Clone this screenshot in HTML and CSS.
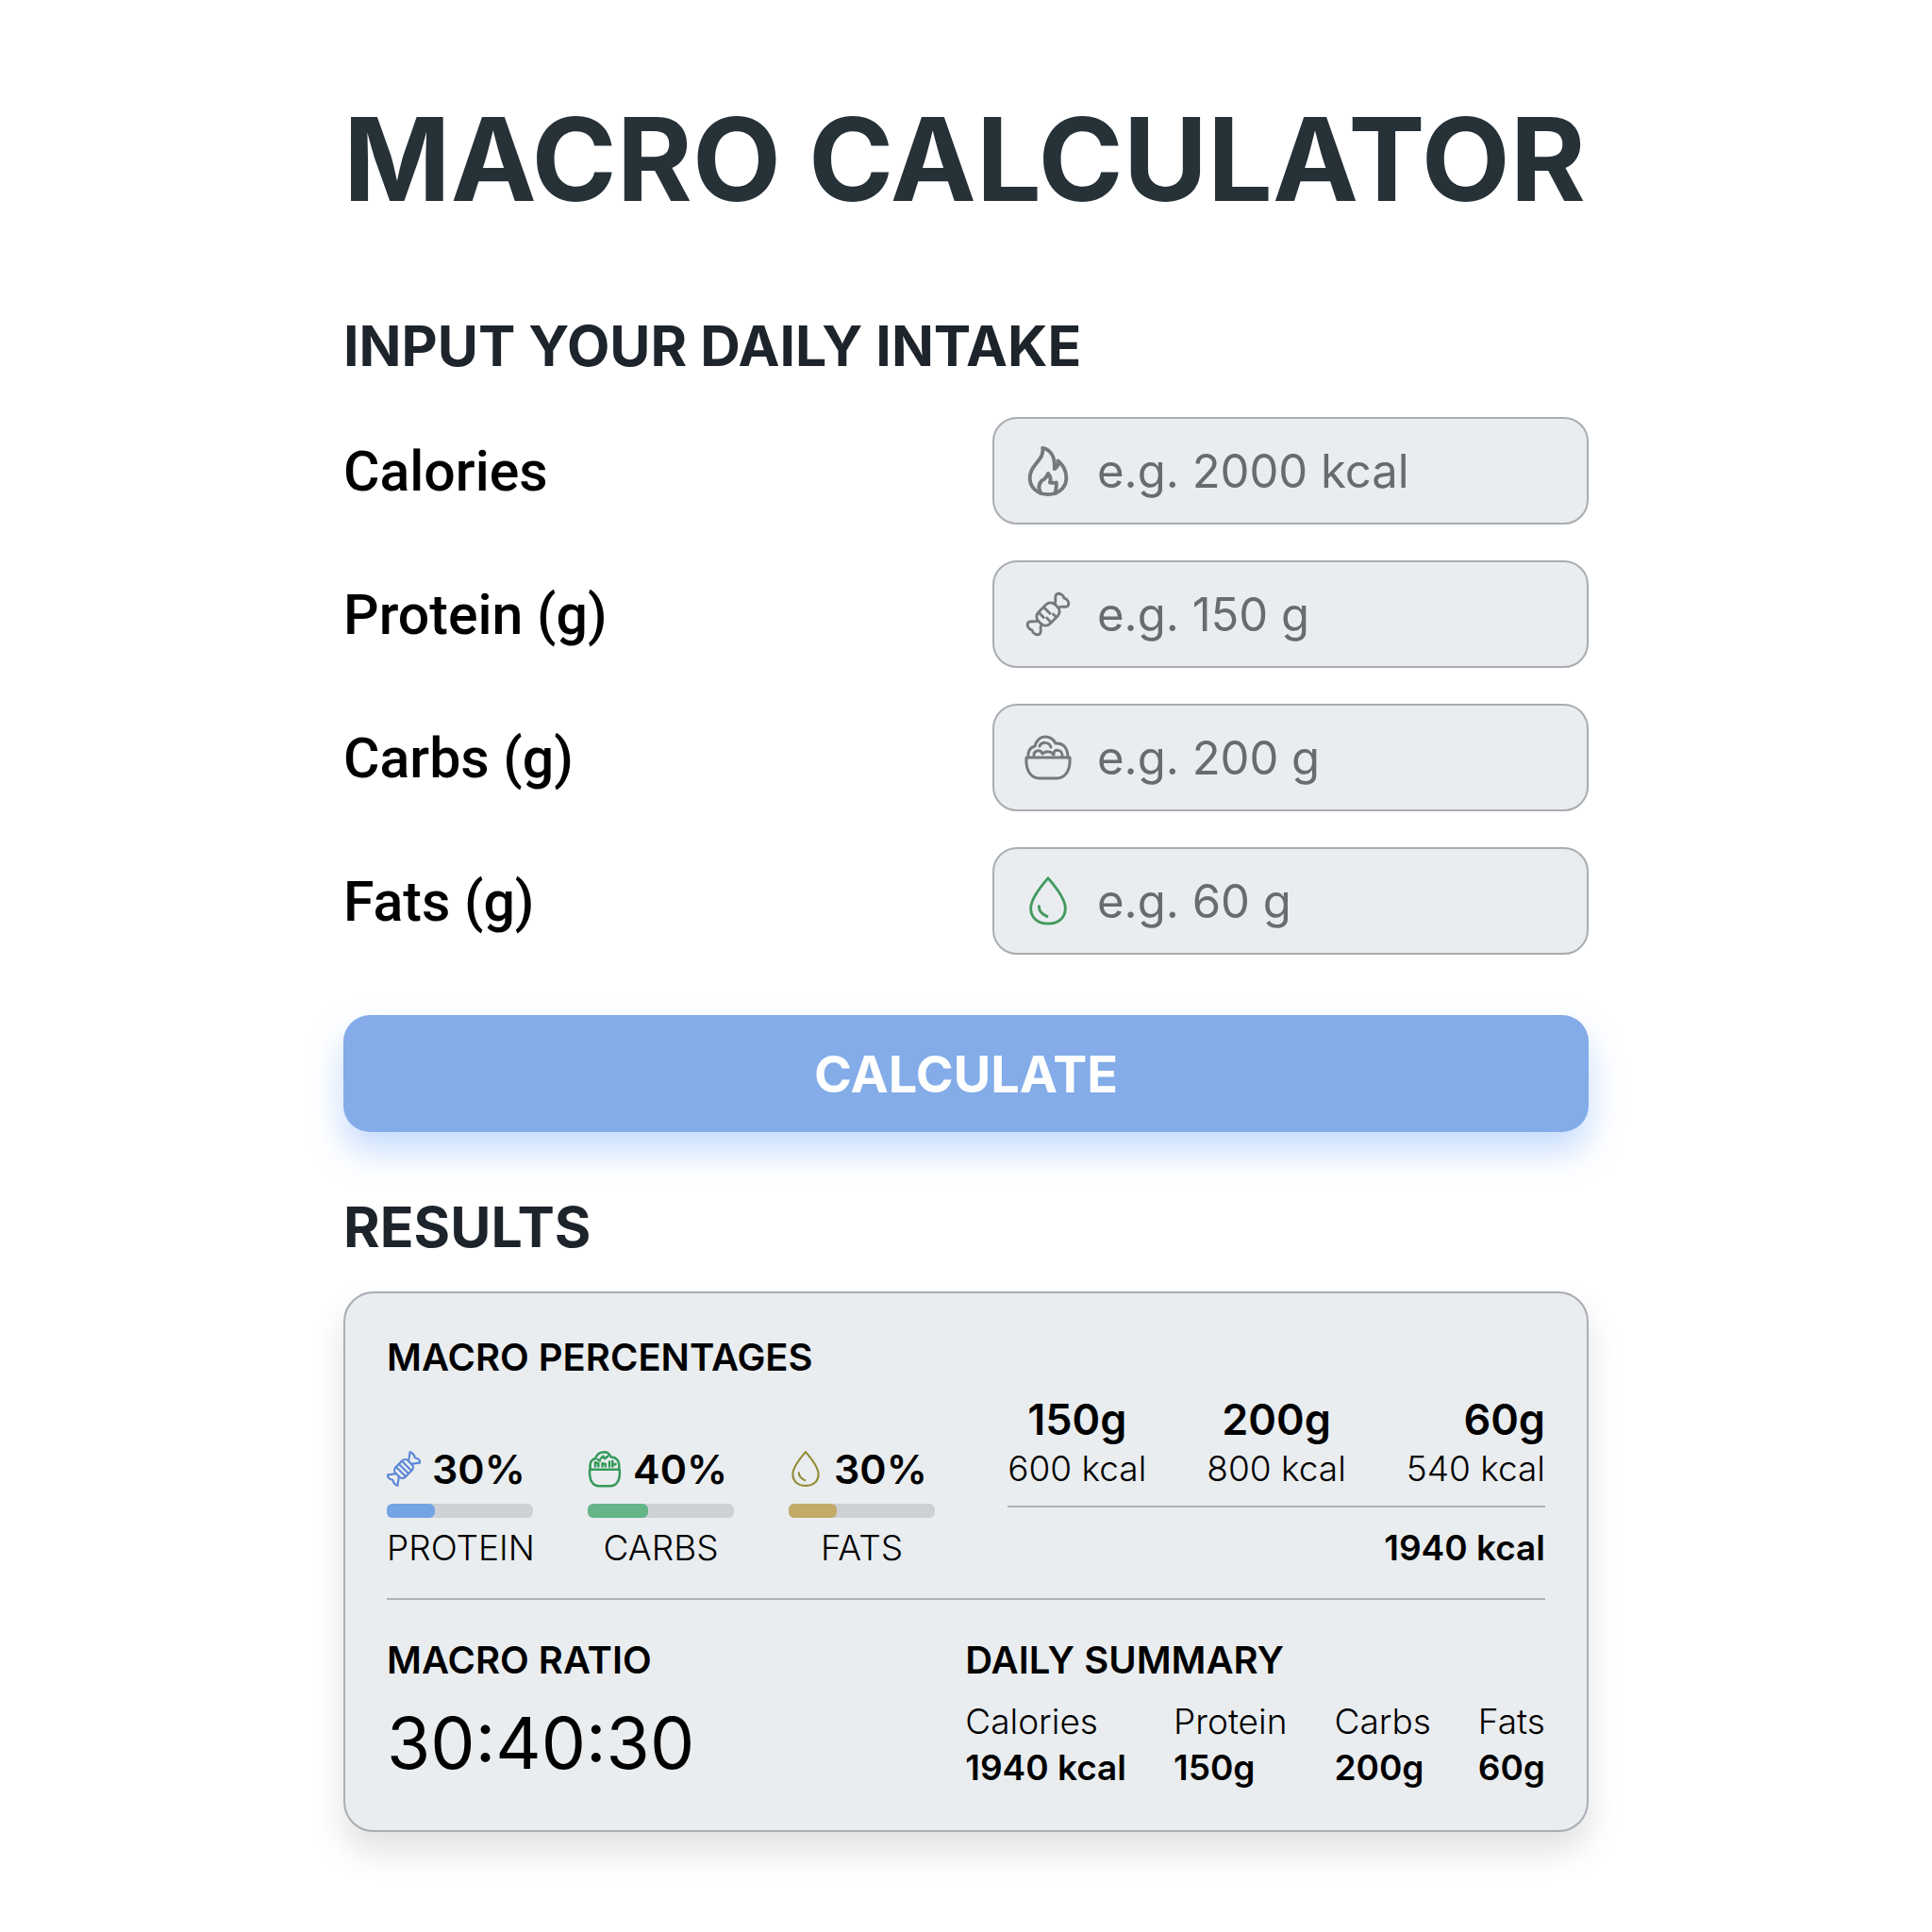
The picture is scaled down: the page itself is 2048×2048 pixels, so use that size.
FILE: index.html
```html
<!DOCTYPE html>
<html lang="en">
<head>
    <meta charset="UTF-8">
    <meta name="viewport" content="width=device-width, initial-scale=1.0">
    <title>Macro Calculator</title>
    <link rel="stylesheet" href="styles.css">
</head>
<body>

    <!-- Shared icons -->
    <svg class="sprite" aria-hidden="true">
        <symbol id="icon-flame" viewBox="0 0 46 56">
            <path d="M17 3C26 5 31 13 30 26 33 24 35 21 34 17 40 22 43 29 43 36 43 47 34 54 23 54S3 47 3 36C3 29 6 25 10 20 15 14 18 10 17 3z"/>
            <path d="M15 53C12 47 13 42 16 39 20 37 22 34 23 31 26 34 26 38 25 41 28 41 30 42 32 41 33 45 31 48 31 53"/>
        </symbol>
        <symbol id="icon-candy" viewBox="3 0 50 50">
            <g transform="rotate(-45 28 25)">
                <rect x="15" y="16" width="26" height="18" rx="7"/>
                <path d="M41 22C45 22 46 16 50 16 54 17 55 22 53 25 55 28 54 33 50 34 46 34 45 28 41 28"/>
                <path d="M15 22C11 22 10 16 6 16 2 17 1 22 3 25 1 28 2 33 6 34 10 34 11 28 15 28"/>
                <path d="M22 17v7M30 17v9M24 33v-6M32 33v-4"/>
            </g>
        </symbol>
        <symbol id="icon-candy-striped" viewBox="3 0 50 50">
            <g transform="rotate(-45 28 25)">
                <rect x="15" y="15" width="26" height="20" rx="6"/>
                <path d="M41 22L52 14C54 18 54 21 51 25 54 29 54 32 52 36L41 28"/>
                <path d="M15 22L4 14C2 18 2 21 5 25 2 29 2 32 4 36L15 28"/>
                <path d="M22 15v20M28 15v20M34 15v20"/>
            </g>
        </symbol>
        <symbol id="icon-bowl" viewBox="0 0 50 48">
            <path d="M2 24H48C49 38 43 46 34 46H16C7 46 1 38 2 24z"/>
            <path d="M4 24C3 18 6 13 11 12 13 5 17 2 22 2S31 5 33 9C41 8 46 14 46 24"/>
            <path d="M10 23C9 16 17 15 19 20 23 17 28 17 31 21 30 14 41 15 40 23M16 12C18 7 26 7 28 13"/>
        </symbol>
        <symbol id="icon-bowl-full" viewBox="0 0 42 48">
            <path d="M2 25H40C41 39 36 46 28 46H14C6 46 1 39 2 25z"/>
            <path d="M3 25C1 17 4 12 9 11 11 5 15 3 19 3 24 2 27 5 29 9 36 9 41 15 39 25"/>
            <path d="M9 21v-5l4 1v4M18 21v-4l4 1v3M27 15v6M31 14v7M35 18l-3 1M16 11l3-3 2 3 4-3M12 12l3 2"/>
        </symbol>
        <symbol id="icon-drop" viewBox="0 0 44 56">
            <path d="M22 3C29 11 41 25 41 36 41 47 33 53 22 53S3 47 3 36C3 25 15 11 22 3z"/>
            <path d="M12 34C12 40 16 43 21 45"/>
        </symbol>
    </svg>

    <main class="calculator">
        <h1>MACRO CALCULATOR</h1>

        <form class="intake">
            <h2>INPUT YOUR DAILY INTAKE</h2>

            <div class="field">
                <label for="calories">Calories</label>
                <div class="input-box">
                    <svg class="icon"><use href="#icon-flame"/></svg>
                    <input type="text" id="calories" name="calories" placeholder="e.g. 2000 kcal">
                </div>
            </div>

            <div class="field">
                <label for="protein">Protein (g)</label>
                <div class="input-box">
                    <svg class="icon icon-thin"><use href="#icon-candy"/></svg>
                    <input type="text" id="protein" name="protein" placeholder="e.g. 150 g">
                </div>
            </div>

            <div class="field">
                <label for="carbs">Carbs (g)</label>
                <div class="input-box">
                    <svg class="icon icon-thin"><use href="#icon-bowl"/></svg>
                    <input type="text" id="carbs" name="carbs" placeholder="e.g. 200 g">
                </div>
            </div>

            <div class="field">
                <label for="fats">Fats (g)</label>
                <div class="input-box">
                    <svg class="icon icon-green"><use href="#icon-drop"/></svg>
                    <input type="text" id="fats" name="fats" placeholder="e.g. 60 g">
                </div>
            </div>

            <button type="button">CALCULATE</button>
        </form>

        <h2>RESULTS</h2>

        <section class="results">
            <div class="results-top">
                <div class="percentages">
                    <h3>MACRO PERCENTAGES</h3>
                    <div class="macros">
                        <div class="macro protein">
                            <div class="macro-value"><svg class="icon"><use href="#icon-candy-striped"/></svg>30%</div>
                            <div class="bar"><div class="bar-fill" style="width: 33%"></div></div>
                            <div class="macro-name">PROTEIN</div>
                        </div>
                        <div class="macro carbs">
                            <div class="macro-value"><svg class="icon"><use href="#icon-bowl-full"/></svg>40%</div>
                            <div class="bar"><div class="bar-fill" style="width: 41%"></div></div>
                            <div class="macro-name">CARBS</div>
                        </div>
                        <div class="macro fats">
                            <div class="macro-value"><svg class="icon"><use href="#icon-drop"/></svg>30%</div>
                            <div class="bar"><div class="bar-fill" style="width: 33%"></div></div>
                            <div class="macro-name">FATS</div>
                        </div>
                    </div>
                </div>

                <div class="energy">
                    <div class="energy-row">
                        <div class="energy-item"><strong>150g</strong><span>600 kcal</span></div>
                        <div class="energy-item"><strong>200g</strong><span>800 kcal</span></div>
                        <div class="energy-item last"><strong>60g</strong><span>540 kcal</span></div>
                    </div>
                    <div class="energy-total">1940 kcal</div>
                </div>
            </div>

            <div class="results-bottom">
                <div class="ratio">
                    <h3>MACRO RATIO</h3>
                    <p>30:40:30</p>
                </div>
                <div class="summary">
                    <h3>DAILY SUMMARY</h3>
                    <table>
                        <thead>
                            <tr><th>Calories</th><th>Protein</th><th>Carbs</th><th>Fats</th></tr>
                        </thead>
                        <tbody>
                            <tr><td>1940 kcal</td><td>150g</td><td>200g</td><td>60g</td></tr>
                        </tbody>
                    </table>
                </div>
            </div>
        </section>
    </main>

</body>
</html>
```
FILE: styles.css
```css
* {
    box-sizing: border-box;
}

body {
    margin: 0;
    background-color: #fff;
    color: #000;
    font-family: Inter, "Liberation Sans", sans-serif;
}

.sprite {
    position: absolute;
    width: 0;
    height: 0;
}

.calculator {
    max-width: 1320px;
    margin: 0 auto;
    padding: 99px 0;
}

h1,
h2,
h3,
p {
    margin: 0;
}

h1 {
    font-size: 122px;
    line-height: 140px;
    font-weight: 700;
    color: #263138;
    white-space: nowrap;
}

h2 {
    font-size: 59px;
    line-height: 74px;
    font-weight: 700;
    color: #1d242b;
}

h3 {
    font-size: 40px;
    line-height: 52px;
    font-weight: 600;
}

.icon {
    flex: none;
    fill: none;
    stroke: currentColor;
    stroke-width: 4;
    stroke-linecap: round;
    stroke-linejoin: round;
}

.icon-thin {
    stroke-width: 3;
}

/* Form */
.intake {
    display: flex;
    flex-direction: column;
    gap: 38px;
    margin: 91px 0 64px;
}

.field {
    display: grid;
    grid-template-columns: 1fr 632px;
    align-items: center;
}

.field label {
    font-family: Roboto, sans-serif;
    font-size: 59px;
    font-weight: 500;
}

.input-box {
    display: flex;
    align-items: center;
    gap: 27px;
    height: 114px;
    padding: 0 32px;
    border: 2px solid #a9adb1;
    border-radius: 26px;
    background-color: #eaedef;
    color: #75787c;
}

.input-box .icon {
    width: 50px;
    height: 54px;
}

.input-box .icon-thin {
    height: 48px;
}

.input-box .icon-green {
    color: #43995f;
    stroke-width: 3;
}

.input-box input {
    flex: 1;
    min-width: 0;
    padding: 0;
    border: none;
    outline: none;
    background: none;
    font-family: inherit;
    font-size: 49px;
}

.input-box input::placeholder {
    color: #686b70;
    opacity: 1;
}

button {
    height: 124px;
    margin-top: 26px;
    border: none;
    border-radius: 28px;
    background-color: #83ace8;
    box-shadow: 0 20px 36px rgba(110, 165, 250, 0.4);
    color: #fff;
    font-family: inherit;
    font-size: 54px;
    font-weight: 700;
    cursor: pointer;
}

/* Results */
.results {
    margin-top: 31px;
    padding: 42px 44px;
    border: 2px solid #a9adb3;
    border-radius: 32px;
    background-color: #eaedef;
    box-shadow: 0 20px 36px rgba(0, 0, 0, 0.12);
}

.results-top {
    display: flex;
    justify-content: space-between;
    align-items: flex-end;
    padding-bottom: 30px;
    border-bottom: 2px solid #afb3b9;
}

.macros {
    display: flex;
    gap: 58px;
    margin-top: 64px;
}

.macro {
    width: 155px;
    text-align: center;
}

.macro-value {
    display: flex;
    align-items: center;
    gap: 12px;
    font-size: 43px;
    line-height: 56px;
    font-weight: 600;
}

.macro-value .icon {
    width: 36px;
    height: 40px;
    stroke-width: 3;
}

.bar {
    height: 15px;
    margin: 9px 0;
    border-radius: 6px;
    background-color: #cdd1d6;
}

.bar-fill {
    height: 100%;
    border-radius: 6px;
}

.protein .icon {
    color: #5b87d8;
}

.protein .bar-fill {
    background-color: #74a3e6;
}

.carbs .icon {
    color: #35995a;
}

.carbs .bar-fill {
    background-color: #65b588;
}

.fats .icon {
    color: #918b35;
}

.fats .bar-fill {
    background-color: #c2aa67;
}

.macro-name {
    font-size: 37px;
    line-height: 46px;
    font-weight: 300;
}

.energy-row {
    display: flex;
    gap: 64px;
    padding-bottom: 15px;
    border-bottom: 2px solid #afb3b9;
}

.energy-item {
    display: flex;
    flex-direction: column;
    align-items: center;
    font-size: 37px;
    line-height: 48px;
    font-weight: 300;
}

.energy-item strong {
    font-size: 45px;
    line-height: 56px;
    font-weight: 600;
}

.energy-item.last {
    align-items: flex-end;
}

.energy-total {
    margin-top: 20px;
    text-align: right;
    font-size: 37px;
    line-height: 46px;
    font-weight: 600;
}

.results-bottom {
    display: flex;
    justify-content: space-between;
    padding-top: 38px;
}

.ratio p {
    margin-top: 14px;
    font-size: 75px;
    line-height: 96px;
}

table {
    margin-top: 14px;
    border-collapse: collapse;
    font-size: 37px;
    line-height: 49px;
    text-align: left;
}

th {
    padding: 0 50px 0 0;
    font-weight: 300;
}

td {
    padding: 0 50px 0 0;
    font-weight: 600;
}

th:last-child,
td:last-child {
    padding-right: 0;
}
```
